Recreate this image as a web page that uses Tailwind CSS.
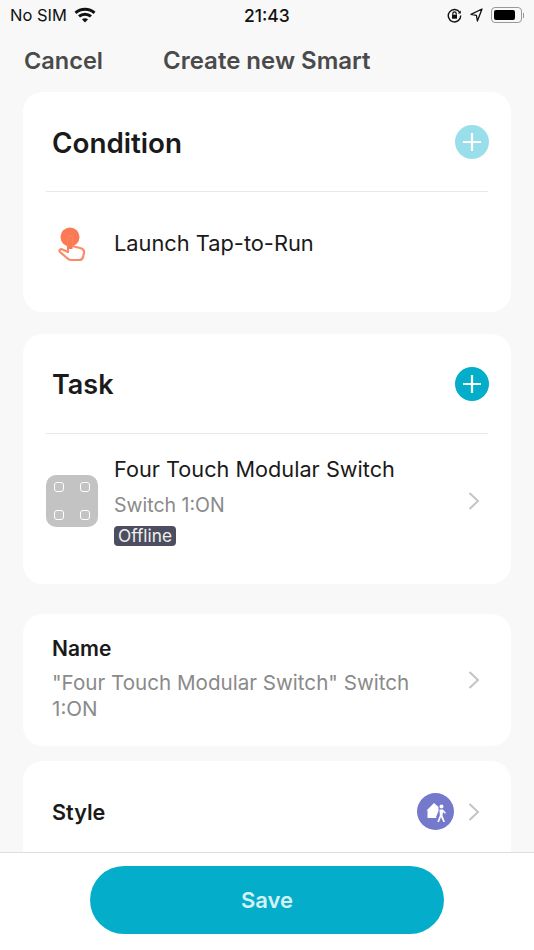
<!DOCTYPE html>
<html lang="en">
<head>
  <meta charset="UTF-8" />
  <meta name="viewport" content="width=device-width, initial-scale=1.0" />
  <title>Create new Smart</title>
  <script src="https://cdn.jsdelivr.net/npm/@tailwindcss/browser@4"></script>
</head>
<body class="bg-[#f8f8f8] font-['Inter',sans-serif] text-[#1a1a1a]">
<div class="w-[534px] h-[950px] overflow-hidden flex flex-col">

  <!-- Status bar -->
  <div class="h-[30px] shrink-0 relative flex items-center justify-between pl-[10px] pr-[10px] text-[16.500px] text-[#111]">
    <div class="flex items-center gap-[7px]">
      <span>No SIM</span>
      <svg width="22" height="16" viewBox="0 0 22 16" fill="none" stroke="#111" stroke-width="3">
        <path d="M1.500 5.800C6.800 1 15.200 1 20.500 5.800" />
        <path d="M5 9.400C8.400 6.400 13.600 6.400 17 9.400" />
        <path d="M11 15.500 7.900 12.300C9.700 10.800 12.300 10.800 14.100 12.300Z" fill="#111" stroke="none" />
      </svg>
    </div>
    <span class="absolute left-[244px] top-[3px] text-[17.500px] font-medium text-[#111]">21:43</span>
    <div class="flex items-center gap-[8px]">
      <svg width="15" height="15" viewBox="0 0 15 15" fill="none" stroke="#111">
        <path d="M12.800 4.500A6.200 6.200 0 1 0 13.700 7.500" stroke-width="1.400" />
        <path d="M13.800 2.500v3h-3z" fill="#111" stroke="none" />
        <rect x="5" y="6.700" width="5" height="4" fill="#111" stroke="none" />
        <path d="M5.800 6.800V5.600a1.700 1.700 0 0 1 3.400 0v1.200" stroke-width="1.200" />
      </svg>
      <svg width="13" height="14" viewBox="0 0 13 14" fill="none" stroke="#111" stroke-width="1.300" stroke-linejoin="round">
        <path d="M12 1 1 6.400 6.400 7.400 7.400 13Z" />
      </svg>
      <div class="flex items-center gap-[1px]">
        <div class="w-[31px] h-[16px] border border-[#999] rounded-[4px] p-[2px]">
          <div class="w-[21px] h-full bg-black rounded-[2px]"></div>
        </div>
        <div class="w-[1px] h-[5px] bg-[#999]"></div>
      </div>
    </div>
  </div>

  <!-- Nav -->
  <div class="h-[62px] shrink-0 relative flex items-center pl-[24px] font-semibold text-[#4a4a4a] text-[23.500px]">
    <span>Cancel</span>
    <span class="absolute left-[163px] top-[13px] text-[24px]">Create new Smart</span>
  </div>

  <!-- Content -->
  <div class="flex-1 min-h-0 overflow-hidden px-[23px]">
    <!-- Condition -->
    <div class="bg-white rounded-[20px] h-[220px] px-[23px] mb-[22px]">
      <div class="h-[100px] border-b border-[#e8e8e8] flex items-center justify-between pl-[6px]">
        <h2 class="text-[27.800px] font-semibold mt-[4px]">Condition</h2>
        <div class="w-[34px] h-[34px] mr-[-1px] rounded-full bg-[#99dfeb] flex items-center justify-center">
          <svg width="20" height="20" viewBox="0 0 20 20" stroke="#fff" stroke-width="2.200"><path d="M10 1v18M1 10h18" /></svg>
        </div>
      </div>
      <div class="flex items-center h-[102px] pl-[6px] gap-[26px]">
        <svg width="36" height="37" viewBox="0 0 36 37" fill="none">
          <circle cx="18" cy="12" r="9.500" fill="#fb7a55" />
          <path d="M16 13c0-2 4-2 4 0v8l8 2c3 .7 4.500 2 4 5l-1 4c-.4 2-2 3-4 3h-8c-2 0-3-.8-4-2l-7-6c-1.500-1.500.5-3.500 2.500-2.500l5.500 2.500z" fill="#fff" stroke="#fb8a68" stroke-width="2.200" stroke-linejoin="round" />
          <path d="M15.500 13c0-2 5-2 5 0v11h-5z" fill="#fb7a55" />
        </svg>
        <span class="text-[21.800px]">Launch Tap-to-Run</span>
      </div>
    </div>

    <!-- Task -->
    <div class="bg-white rounded-[20px] h-[250px] px-[23px] mb-[30px]">
      <div class="h-[100px] border-b border-[#e8e8e8] flex items-center justify-between pl-[6px]">
        <h2 class="text-[27px] font-semibold mt-[3px]">Task</h2>
        <div class="w-[34px] h-[34px] mr-[-1px] rounded-full bg-[#04aecb] flex items-center justify-center">
          <svg width="20" height="20" viewBox="0 0 20 20" stroke="#fff" stroke-width="2.200"><path d="M10 1v18M1 10h18" /></svg>
        </div>
      </div>
      <div class="flex items-center justify-between pt-[21px] pr-[8px]">
        <div class="flex items-center gap-[16px]">
          <div class="w-[52px] h-[52px] rounded-[10px] bg-[#c3c3c3] grid grid-cols-[10px_10px] gap-x-[16px] gap-y-[18px] place-content-center">
            <div class="w-[10px] h-[10px] rounded-[3px] border-[1.500px] border-white"></div>
            <div class="w-[10px] h-[10px] rounded-[3px] border-[1.500px] border-white"></div>
            <div class="w-[10px] h-[10px] rounded-[3px] border-[1.500px] border-white"></div>
            <div class="w-[10px] h-[10px] rounded-[3px] border-[1.500px] border-white"></div>
          </div>
          <div class="flex flex-col items-start">
            <span class="text-[21.700px] leading-[28px]">Four Touch Modular Switch</span>
            <span class="text-[19.500px] leading-[24px] text-[#8a8a8a] mt-[10px]">Switch 1:ON</span>
            <span class="text-[17.300px] leading-[20px] text-[#f0f0f0] bg-[#4c4d5e] rounded-[4px] px-[4px] mt-[9px]">Offline</span>
          </div>
        </div>
        <svg width="12" height="20" viewBox="0 0 12 20" fill="none" stroke="#c4c4c4" stroke-width="2"><path d="M1.500 2 10 10l-8.500 8" /></svg>
      </div>
    </div>

    <!-- Name -->
    <div class="bg-white rounded-[20px] h-[132px] pl-[29px] pr-[31px] pt-[21px] mb-[15px] flex items-start justify-between">
      <div class="w-[380px]">
        <h3 class="text-[21px] leading-[28px] font-semibold">Name</h3>
        <p class="text-[20.600px] leading-[26px] text-[#8a8a8a] mt-[7px]">"Four Touch Modular Switch" Switch 1:ON</p>
      </div>
      <svg class="mt-[35px]" width="12" height="20" viewBox="0 0 12 20" fill="none" stroke="#c4c4c4" stroke-width="2"><path d="M1.500 2 10 10l-8.500 8" /></svg>
    </div>

    <!-- Style -->
    <div class="bg-white rounded-[20px] h-[110px] pl-[29px] pr-[31px] pt-[32px] flex items-start justify-between">
      <h3 class="text-[21.600px] leading-[38px] font-semibold">Style</h3>
      <div class="flex items-center gap-[14px]">
        <div class="w-[37px] h-[37px] rounded-full bg-[#7579cc] flex items-center justify-center">
          <svg width="24" height="24" viewBox="0 0 24 24" fill="#fff">
            <path d="M2.500 10.500 10 3l4.500 4v4l-2.500 6 .5 1H3.500v-7.500z" />
            <circle cx="17.500" cy="6.500" r="2" />
            <path d="M15.500 9.500h3.500l3 3.500-1 .8-2-1.800-.5 3.500 2.500 6.500h-1.700l-2.300-5-2 5h-1.700l2.500-6.500z" />
          </svg>
        </div>
        <svg width="12" height="20" viewBox="0 0 12 20" fill="none" stroke="#c4c4c4" stroke-width="2"><path d="M1.500 2 10 10l-8.500 8" /></svg>
      </div>
    </div>
  </div>

  <!-- Footer -->
  <div class="h-[98px] shrink-0 bg-white border-t border-[#dedede] flex justify-center pt-[13px]">
    <button class="w-[354px] h-[68px] rounded-full bg-[#04aecb] text-[22px] font-semibold text-[#d4f2f6]">Save</button>
  </div>

</div>
</body>
</html>
